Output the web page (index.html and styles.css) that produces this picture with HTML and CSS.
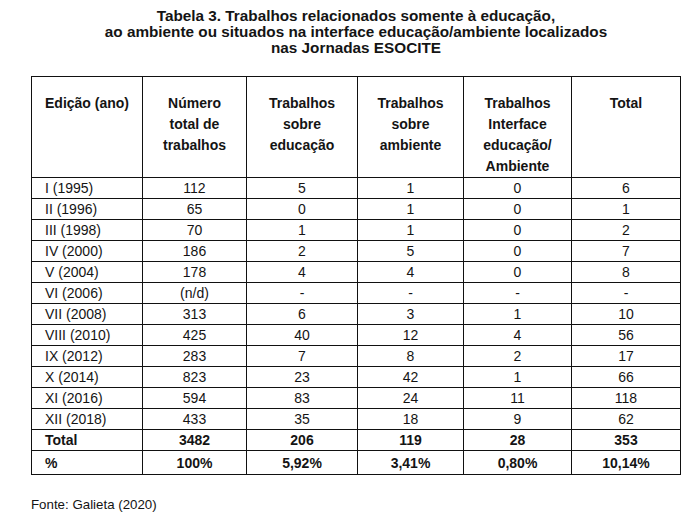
FILE: index.html
```html
<!DOCTYPE html>
<html lang="pt">
<head>
<meta charset="utf-8">
<link rel="stylesheet" href="styles.css">
<title>Tabela 3</title>
</head>
<body>
<div class="page">
  <h1 class="title">Tabela 3. Trabalhos relacionados somente à educação,<br>ao ambiente ou situados na interface educação/ambiente localizados<br>nas Jornadas ESOCITE</h1>
  <table class="data">
    <colgroup>
      <col class="c1"><col class="c2"><col class="c3"><col class="c4"><col class="c5"><col class="c6">
    </colgroup>
    <thead>
      <tr>
        <th class="left">Edição (ano)</th>
        <th>Número<br>total de<br>trabalhos</th>
        <th>Trabalhos<br>sobre<br>educação</th>
        <th>Trabalhos<br>sobre<br>ambiente</th>
        <th>Trabalhos<br>Interface<br>educação/<br>Ambiente</th>
        <th>Total</th>
      </tr>
    </thead>
    <tbody>
      <tr><td class="left">I (1995)</td><td>112</td><td>5</td><td>1</td><td>0</td><td>6</td></tr>
      <tr><td class="left">II (1996)</td><td>65</td><td>0</td><td>1</td><td>0</td><td>1</td></tr>
      <tr><td class="left">III (1998)</td><td>70</td><td>1</td><td>1</td><td>0</td><td>2</td></tr>
      <tr><td class="left">IV (2000)</td><td>186</td><td>2</td><td>5</td><td>0</td><td>7</td></tr>
      <tr><td class="left">V (2004)</td><td>178</td><td>4</td><td>4</td><td>0</td><td>8</td></tr>
      <tr><td class="left">VI (2006)</td><td>(n/d)</td><td>-</td><td>-</td><td>-</td><td>-</td></tr>
      <tr><td class="left">VII (2008)</td><td>313</td><td>6</td><td>3</td><td>1</td><td>10</td></tr>
      <tr><td class="left">VIII (2010)</td><td>425</td><td>40</td><td>12</td><td>4</td><td>56</td></tr>
      <tr><td class="left">IX (2012)</td><td>283</td><td>7</td><td>8</td><td>2</td><td>17</td></tr>
      <tr><td class="left">X (2014)</td><td>823</td><td>23</td><td>42</td><td>1</td><td>66</td></tr>
      <tr><td class="left">XI (2016)</td><td>594</td><td>83</td><td>24</td><td>11</td><td>118</td></tr>
      <tr><td class="left">XII (2018)</td><td>433</td><td>35</td><td>18</td><td>9</td><td>62</td></tr>
      <tr class="bold"><td class="left">Total</td><td>3482</td><td>206</td><td>119</td><td>28</td><td>353</td></tr>
      <tr class="bold last"><td class="left">%</td><td>100%</td><td>5,92%</td><td>3,41%</td><td>0,80%</td><td>10,14%</td></tr>
    </tbody>
  </table>
  <p class="source">Fonte: Galieta (2020)</p>
</div>
</body>
</html>
```

FILE: styles.css
```css
html, body {
  margin: 0;
  padding: 0;
  background: #ffffff;
}

body {
  font-family: "Liberation Sans", Arial, sans-serif;
  color: #141414;
}

.page {
  width: 693px;
  padding: 8px 0 0 31px;
  box-sizing: border-box;
}

.title {
  width: 650px;
  margin: 0;
  font-size: 15.3px;
  font-weight: bold;
  line-height: 16px;
  text-align: center;
}

.data {
  margin-top: 20px;
  width: 650px;
  border-collapse: collapse;
  table-layout: fixed;
  font-size: 14px;
}

.c1 { width: 111px; }
.c2 { width: 104px; }
.c3 { width: 111px; }
.c4 { width: 106px; }
.c5 { width: 108px; }
.c6 { width: 109px; }

.data th,
.data td {
  border: 1px solid #111;
  padding: 0 4px;
  text-align: center;
}

.data th {
  height: 100px;
  vertical-align: top;
  padding-top: 16px;
  box-sizing: border-box;
  font-weight: bold;
  line-height: 21px;
}

.data td {
  height: 20px;
  line-height: 20px;
  vertical-align: middle;
}

.data .left {
  text-align: left;
  padding-left: 13px;
}

.data .bold td {
  font-weight: bold;
}

.data .last td {
  height: 23px;
}

.source {
  margin: 22px 0 0 0;
  font-size: 13.3px;
  line-height: 16px;
}
```
